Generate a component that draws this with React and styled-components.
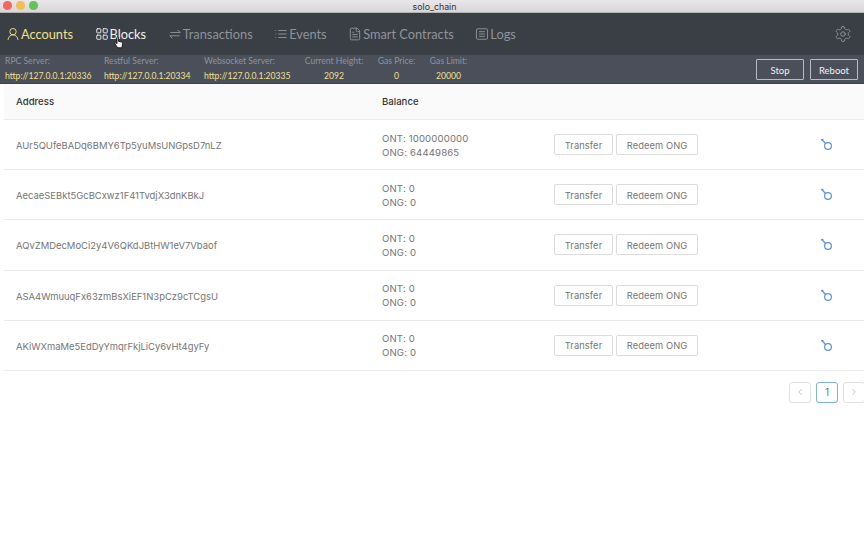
import React from 'react';
import styled, { createGlobalStyle } from 'styled-components';
import { LuLayoutGrid, LuList, LuFileText, LuSettings, LuChevronLeft, LuChevronRight } from 'react-icons/lu';

const GlobalStyle = createGlobalStyle`
	html, body {
		margin: 0;
		padding: 0;
		background: #fff;
		overflow: hidden;
	}
	* {
		box-sizing: border-box;
	}
`;

const Page = styled.div`
	position: relative;
	width: 864px;
	height: 540px;
	overflow: hidden;
	font-family: Inter, 'Liberation Sans', sans-serif;
`;

const TitleBar = styled.div`
	position: relative;
	display: flex;
	align-items: center;
	justify-content: center;
	height: 13px;
	padding-left: 5px;
	background: linear-gradient(#e9e7e9, #d8d6d8);
	border-bottom: 1px solid #b4b4b4;
	font-size: 8.8px;
	color: #333;
`;

const Lights = styled.div`
	position: absolute;
	top: 1px;
	left: 3px;
	display: flex;
	gap: 4.5px;
`;

const Light = styled.span`
	width: 8.5px;
	height: 8.5px;
	border-radius: 50%;
	background: ${(p) => p.color};
`;

const Nav = styled.nav`
	display: flex;
	align-items: center;
	height: 42px;
	padding: 0 12px 0 6px;
	background: #3a3e45;
	font-family: Lato, sans-serif;
	font-size: 12.8px;
`;

const NavItem = styled.div`
	display: flex;
	align-items: center;
	gap: 1px;
	margin-right: 21.5px;
	color: ${(p) => (p.active ? '#f3e08c' : p.hover ? '#f1f1f1' : '#8f939a')};

	svg {
		width: 14px;
		height: 14px;
		stroke-width: 1.6;
		fill: none;
		stroke: currentColor;
	}
`;

const Gear = styled.div`
	display: flex;
	margin-left: auto;
	color: #8f939a;

	svg {
		width: 18px;
		height: 18px;
		stroke-width: 1.3;
	}
`;

const InfoBar = styled.div`
	display: flex;
	align-items: center;
	height: 29px;
	padding: 0 6px 0 5px;
	background: #4a4f5a;
	border-bottom: 1px solid #3f434c;
`;

const Stat = styled.div`
	display: flex;
	flex-direction: column;
	align-items: ${(p) => (p.center ? 'center' : 'flex-start')};
	gap: 4px;
	width: ${(p) => p.width}px;
	margin-right: 13px;
	font-family: Lato, sans-serif;
	font-size: 8.6px;
	line-height: 11px;
`;

const StatLabel = styled.span`
	color: #8f939d;
`;

const StatValue = styled.span`
	color: #f3e08c;
	white-space: nowrap;
`;

const BarActions = styled.div`
	display: flex;
	gap: 6px;
	margin: 1px 0 0 auto;
`;

const BarButton = styled.button`
	width: 48px;
	height: 21px;
	padding: 1px 0 0;
	background: transparent;
	border: 1px solid #b8bbc1;
	border-radius: 1px;
	color: #f2f2f2;
	font-family: Lato, sans-serif;
	font-size: 9.5px;
`;

const Table = styled.div`
	margin-left: 4px;
`;

const Row = styled.div`
	display: grid;
	grid-template-columns: 366px 172px 265px 1fr;
	align-items: center;
	height: ${(p) => (p.head ? '36px' : '50.2px')};
	padding: ${(p) => (p.head ? '0' : '2px')} 0 0 12px;
	background: ${(p) => (p.head ? '#fafafa' : '#fff')};
	border-bottom: 1px solid #eaeaea;
	font-size: 9.6px;
	color: ${(p) => (p.head ? '#333' : '#757575')};
	font-weight: ${(p) => (p.head ? 500 : 400)};
`;

const Address = styled.div`
	font-size: 9.45px;
`;

const Balance = styled.div`
	line-height: 14px;
	letter-spacing: 0.15px;
`;

const Actions = styled.div`
	display: flex;
	gap: 3px;
	margin-top: -2px;
`;

const Button = styled.button`
	width: ${(p) => p.width}px;
	height: 21px;
	padding: 1px 0 0;
	background: #fff;
	border: 1px solid #dcdcdc;
	border-radius: 2px;
	color: #757575;
	font-family: Inter, sans-serif;
	font-size: 9.3px;
	letter-spacing: 0.1px;
`;

const KeyIcon = styled.svg`
	display: block;
	width: 14px;
	height: 14px;
	margin-top: -3px;
	fill: none;
	stroke: #5b93d8;
	stroke-width: 1.2;
`;

const Pagination = styled.div`
	display: flex;
	justify-content: flex-end;
	gap: 5px;
	margin: 11px -1px 0 0;
`;

const PageBox = styled.div`
	display: flex;
	align-items: center;
	justify-content: center;
	width: 22px;
	height: 21px;
	border: 1px solid ${(p) => (p.current ? '#7fb0e4' : '#e2e2e2')};
	border-radius: 3px;
	color: ${(p) => (p.current ? '#4a80b8' : '#bbb')};
	font-size: 10px;

	svg {
		width: 10px;
		height: 10px;
	}
`;

const Cursor = styled.svg`
	position: absolute;
	left: 114px;
	top: 36px;
	width: 10px;
	height: 13px;
`;

const UserIcon = () => (
	<svg viewBox="0 0 24 24">
		<circle cx="12" cy="8" r="5.5" />
		<path d="M3.5 22c.4-5 4-8.5 8.5-8.5s8.1 3.5 8.5 8.5" />
	</svg>
);

const SwapIcon = () => (
	<svg viewBox="0 0 24 24">
		<path d="M4 9.5h17L16.5 5M20 15H3l4.5 4.5" />
	</svg>
);

const LogIcon = () => (
	<svg viewBox="0 0 24 24">
		<rect x="2.5" y="3" width="19" height="18" rx="2" />
		<path d="M7 8h10M7 12h10M7 16h10" />
	</svg>
);

const accounts = [
	{ address: 'AUr5QUfeBADq6BMY6Tp5yuMsUNGpsD7nLZ', ont: '1000000000', ong: '64449865' },
	{ address: 'AecaeSEBkt5GcBCxwz1F41TvdjX3dnKBkJ', ont: '0', ong: '0' },
	{ address: 'AQvZMDecMoCi2y4V6QKdJBtHW1eV7Vbaof', ont: '0', ong: '0' },
	{ address: 'ASA4WmuuqFx63zmBsXiEF1N3pCz9cTCgsU', ont: '0', ong: '0' },
	{ address: 'AKiWXmaMe5EdDyYmqrFkjLiCy6vHt4gyFy', ont: '0', ong: '0' },
];

const stats = [
	{ label: 'RPC Server:', value: 'http://127.0.0.1:20336', width: 86 },
	{ label: 'Restful Server:', value: 'http://127.0.0.1:20334', width: 87 },
	{ label: 'Websocket Server:', value: 'http://127.0.0.1:20335', width: 87 },
	{ label: 'Current Height:', value: '2092', width: 60, center: true },
	{ label: 'Gas Price:', value: '0', width: 39, center: true },
	{ label: 'Gas Limit:', value: '20000', width: 39, center: true },
];

const App = () => (
	<Page>
		<GlobalStyle />
		<TitleBar>
			<Lights>
				<Light color="#ee6a5e" />
				<Light color="#f5bd4f" />
				<Light color="#61c454" />
			</Lights>
			solo_chain
		</TitleBar>
		<Nav>
			<NavItem active><UserIcon />Accounts</NavItem>
			<NavItem hover><LuLayoutGrid />Blocks</NavItem>
			<NavItem><SwapIcon />Transactions</NavItem>
			<NavItem><LuList />Events</NavItem>
			<NavItem><LuFileText />Smart Contracts</NavItem>
			<NavItem><LogIcon />Logs</NavItem>
			<Gear><LuSettings /></Gear>
		</Nav>
		<InfoBar>
			{stats.map((s) => (
				<Stat key={s.label} width={s.width} center={s.center}>
					<StatLabel>{s.label}</StatLabel>
					<StatValue>{s.value}</StatValue>
				</Stat>
			))}
			<BarActions>
				<BarButton>Stop</BarButton>
				<BarButton>Reboot</BarButton>
			</BarActions>
		</InfoBar>
		<Table>
			<Row head>
				<div>Address</div>
				<div>Balance</div>
			</Row>
			{accounts.map((a) => (
				<Row key={a.address}>
					<Address>{a.address}</Address>
					<Balance>
						ONT: {a.ont}
						<br />
						ONG: {a.ong}
					</Balance>
					<Actions>
						<Button width={59}>Transfer</Button>
						<Button width={82}>Redeem ONG</Button>
					</Actions>
					<KeyIcon viewBox="0 0 14 14">
						<circle cx="9" cy="9" r="3.4" />
						<path d="M6.5 6.5 L2.5 2 M2 3 L4.5 2.2" />
					</KeyIcon>
				</Row>
			))}
		</Table>
		<Pagination>
			<PageBox><LuChevronLeft /></PageBox>
			<PageBox current>1</PageBox>
			<PageBox><LuChevronRight /></PageBox>
		</Pagination>
		<Cursor viewBox="0 0 10 13">
			<path
				d="M3 1.2c.6-.6 1.4-.3 1.4.6v3.4l3 .8c.8.2 1.2.8 1.1 1.6L8 11.8H3.8L1 8c-.5-.8.4-1.6 1.2-1L3 7.8z"
				fill="#fff"
				stroke="#111"
				strokeWidth="0.9"
			/>
		</Cursor>
	</Page>
);

export default App;
